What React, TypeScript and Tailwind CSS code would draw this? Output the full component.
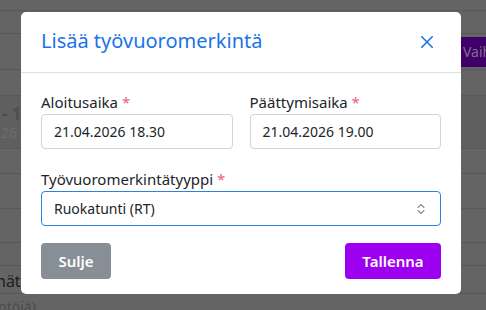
export default function App() {
  return (
    <div className="relative w-[486px] h-[310px] overflow-hidden bg-[#646464] font-['Noto_Sans',sans-serif]">
      {/* backdrop page */}
      <div className="flex flex-col">
        <div className="h-[11px] border-b border-[#585858]" />
        <div className="h-[23px] border-b border-[#585858]" />
        <div className="h-[36px] border-b border-[#585858] flex items-center justify-end">
          <div className="h-[30px] w-[31px] bg-[#40006a] flex items-center pl-[8px] text-[14px] text-[#80708c] whitespace-nowrap overflow-hidden">
            Vaihda
          </div>
        </div>
        <div className="h-[26px] border-b border-[#585858]" />
        <div className="h-[53px] border-b border-[#585858] bg-[#5f5f5f] flex flex-col justify-center pl-[2px] pt-[2px]">
          <div className="text-[17px] font-bold leading-[20px] text-[#4e4e4e] whitespace-nowrap">- 12.00</div>
          <div className="text-[14px] leading-[18px] text-[#6c6c6c] -ml-[1px]">26</div>
        </div>
        <div className="h-[25px] border-b border-[#585858]" />
        <div className="h-[35px] border-b border-[#585858]" />
        <div className="h-[34px] border-b border-[#585858]" />
        <div className="h-[23px] border-b border-[#585858]" />
        <div className="h-[28px] border-b border-[#585858] flex items-center">
          <span className="text-[16px] text-[#1c1c1c] -ml-[4px] pt-[2px]">nät</span>
        </div>
        <div className="h-[20px] pt-[4px]">
          <span className="text-[14px] leading-[18px] text-[#4a4a4a] -ml-[2px] block">ntöjä)</span>
        </div>
      </div>

      {/* modal */}
      <div className="absolute left-[21px] top-[12px] w-[440px] h-[282px] bg-white rounded-[5px] flex flex-col">
        <div className="h-[61px] shrink-0 flex items-center justify-between pl-[20px] pr-[28px] border-b border-[#dee2e6]">
          <h2 className="text-[20px] leading-[28px] text-[#1a73e8] pb-[2px]">Lisää työvuoromerkintä</h2>
          <svg width="12" height="12" viewBox="0 0 12 12" className="mb-[1px]">
            <path d="M0.8 0.8 L11.2 11.2 M11.2 0.8 L0.8 11.2" stroke="#1a73e8" strokeWidth="1.6" strokeLinecap="round" />
          </svg>
        </div>
        <div className="px-[20px] pt-[19px] flex flex-col">
          <div className="grid grid-cols-2 gap-x-[17px]">
            <div className="flex flex-col">
              <label className="text-[15px] leading-[20px] mb-[2px] text-[#212529]">
                Aloitusaika <span className="text-[#f0607a]">*</span>
              </label>
              <div className="h-[35px] border border-[#ced4da] rounded-[4px] px-[12px] flex items-center text-[14px] text-[#212529]">
                21.04.2026 18.30
              </div>
            </div>
            <div className="flex flex-col">
              <label className="text-[15px] leading-[20px] mb-[2px] text-[#212529]">
                Päättymisaika <span className="text-[#f0607a]">*</span>
              </label>
              <div className="h-[35px] border border-[#ced4da] rounded-[4px] px-[12px] flex items-center text-[14px] text-[#212529]">
                21.04.2026 19.00
              </div>
            </div>
          </div>
          <label className="mt-[20px] text-[15px] leading-[20px] mb-[2px] text-[#212529]">
            Työvuoromerkintätyyppi <span className="text-[#f0607a]">*</span>
          </label>
          <div className="h-[35px] border border-[#2f7fe6] rounded-[4px] pl-[12px] pr-[15px] flex items-center justify-between text-[14px] text-[#212529]">
            <span>Ruokatunti (RT)</span>
            <svg width="8" height="12" viewBox="0 0 8 12">
              <path d="M1 4.5 L4 1.5 L7 4.5 M1 7.5 L4 10.5 L7 7.5" stroke="#8a8a8a" strokeWidth="1.1" fill="none" strokeLinecap="round" strokeLinejoin="round" />
            </svg>
          </div>
          <div className="mt-[17px] flex justify-between">
            <button className="w-[70px] h-[36px] rounded-[4px] bg-[#878e96] text-white text-[15px] font-semibold">
              Sulje
            </button>
            <button className="w-[96px] h-[36px] rounded-[4px] bg-[#9d00f0] text-white text-[15px] font-semibold">
              Tallenna
            </button>
          </div>
        </div>
      </div>
    </div>
  );
}
